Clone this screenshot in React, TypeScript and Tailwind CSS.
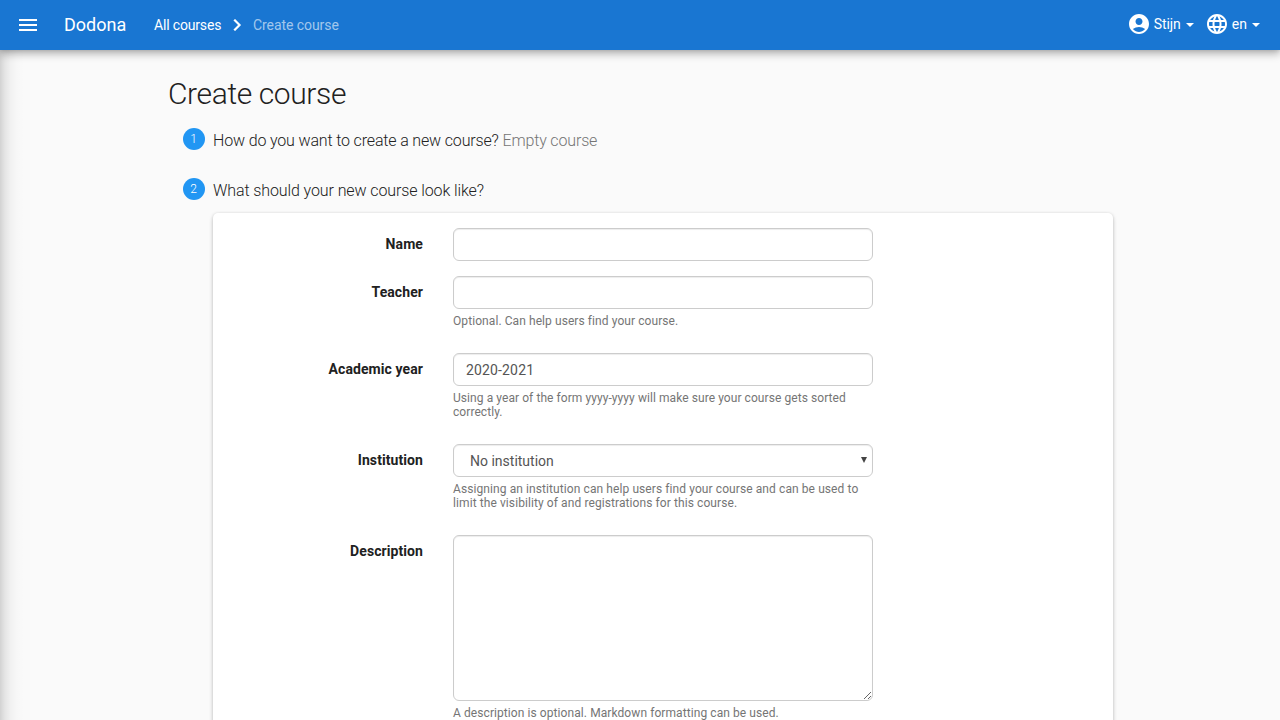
import { MdMenu, MdAccountCircle, MdLanguage } from "react-icons/md";
import type { ReactNode } from "react";

const field =
  "block w-[420px] border border-[#ccc] rounded-[6px] bg-white px-3 text-[14px] text-[#555] shadow-[inset_0_1px_1px_rgba(0,0,0,0.075)]";

function Caret() {
  return <span className="ml-[5px] mt-[2px] border-x-4 border-t-4 border-x-transparent border-t-white" />;
}

function Chevron() {
  return (
    <svg viewBox="0 0 24 24" className="mx-1 size-6 fill-current stroke-current stroke-[0.2px]">
      <path d="M8.59 16.58 13.17 12 8.59 7.41 10 6l6 6-6 6z" />
    </svg>
  );
}

function Row({ label, help, helpClass = "", children }: { label: string; help?: string; helpClass?: string; children: ReactNode }) {
  return (
    <div className="flex mb-[15px]">
      <label className="w-[210px] mr-[30px] pt-[6px] text-right font-bold leading-[20px] tracking-[0.08px]">{label}</label>
      <div className="w-[420px]">
        {children}
        {help && <span className={`block mt-[5px] mb-[10px] text-[12px] leading-[14px] text-[#757575] ${helpClass}`}>{help}</span>}
      </div>
    </div>
  );
}

function Step({ n, className, children }: { n: number; className: string; children: ReactNode }) {
  return (
    <div className="flex h-[22px]">
      <span className="flex items-center justify-center w-[22px] h-[22px] mr-2 pr-px rounded-full bg-[#2196f3] text-white text-[12px] font-light">{n}</span>
      <span className={`pt-[2px] text-[16px] leading-[22px] font-light text-[#212121] ${className}`}>{children}</span>
    </div>
  );
}

export default function App() {
  return (
    <div className="h-screen overflow-hidden bg-[#fafafa] text-[14px] leading-[20px] text-[#212121] font-['Roboto',sans-serif]">
      <nav className="relative z-10 flex items-center h-[50px] bg-[#1976d2] text-white shadow-[0_0_4px_rgba(0,0,0,0.14),0_4px_8px_rgba(0,0,0,0.28)]">
        <MdMenu className="ml-4 size-6" />
        <span className="ml-6 w-[62px] text-[18px]">Dodona</span>
        <span className="ml-7 w-[67px] whitespace-nowrap tracking-[-0.17px]">All courses</span>
        <Chevron />
        <span className="text-white/60 tracking-[-0.07px]">Create course</span>
        <div className="ml-auto mr-5 pb-[2px] flex items-center">
          <MdAccountCircle className="size-6 mr-[3px]" />
          <span className="w-[27px] tracking-[-0.1px]">Stijn</span>
          <Caret />
          <MdLanguage className="size-6 ml-[11px] mr-[3px]" />
          en
          <Caret />
        </div>
      </nav>
      <div className="flex h-[670px]">
        <div className="w-6 shrink-0 bg-[linear-gradient(to_right,rgba(0,0,0,0.16),rgba(0,0,0,0.085)_20%,rgba(0,0,0,0.035)_45%,rgba(0,0,0,0.01)_70%,transparent)]" />
        <main className="ml-[144px] pt-[27px] w-[945px]">
          <h1 className="text-[30px] leading-[33px] font-light tracking-[-0.38px]">Create course</h1>
          <div className="pl-[15px] pt-[18px]">
            <Step n={1} className="tracking-[-0.155px]">
              How do you want to create a new course? <span className="text-[#757575]">Empty course</span>
            </Step>
            <div className="h-7" />
            <Step n={2} className="tracking-[-0.1px]">What should your new course look like?</Step>
            <section className="ml-[30px] mt-[13px] w-[900px] rounded-[5px] bg-white pt-[15px] shadow-[0_2px_4px_rgba(0,0,0,0.22),0_0_3px_rgba(0,0,0,0.08)]">
              <Row label="Name">
                <input className={`${field} h-[33px]`} />
              </Row>
              <Row label="Teacher" help="Optional. Can help users find your course." helpClass="tracking-[0.08px]">
                <input className={`${field} h-[33px]`} />
              </Row>
              <Row label="Academic year" help="Using a year of the form yyyy-yyyy will make sure your course gets sorted correctly." helpClass="tracking-[0.07px]">
                <input className={`${field} h-[33px] tracking-[0.15px]`} defaultValue="2020-2021" />
              </Row>
              <Row label="Institution" help="Assigning an institution can help users find your course and can be used to limit the visibility of and registrations for this course." helpClass="tracking-[0.09px]">
                <button className={`${field} h-[33px]`}>
                  <span className="flex items-center pl-1">
                    No institution
                    <span className="ml-auto -mr-[7px] mb-[2px] border-x-[3px] border-t-[6px] border-x-transparent border-t-[#444]" />
                  </span>
                </button>
              </Row>
              <Row label="Description" help="A description is optional. Markdown formatting can be used." helpClass="tracking-[0.08px]">
                <textarea className={`${field} h-[166px] resize`} />
              </Row>
            </section>
          </div>
        </main>
      </div>
    </div>
  );
}
